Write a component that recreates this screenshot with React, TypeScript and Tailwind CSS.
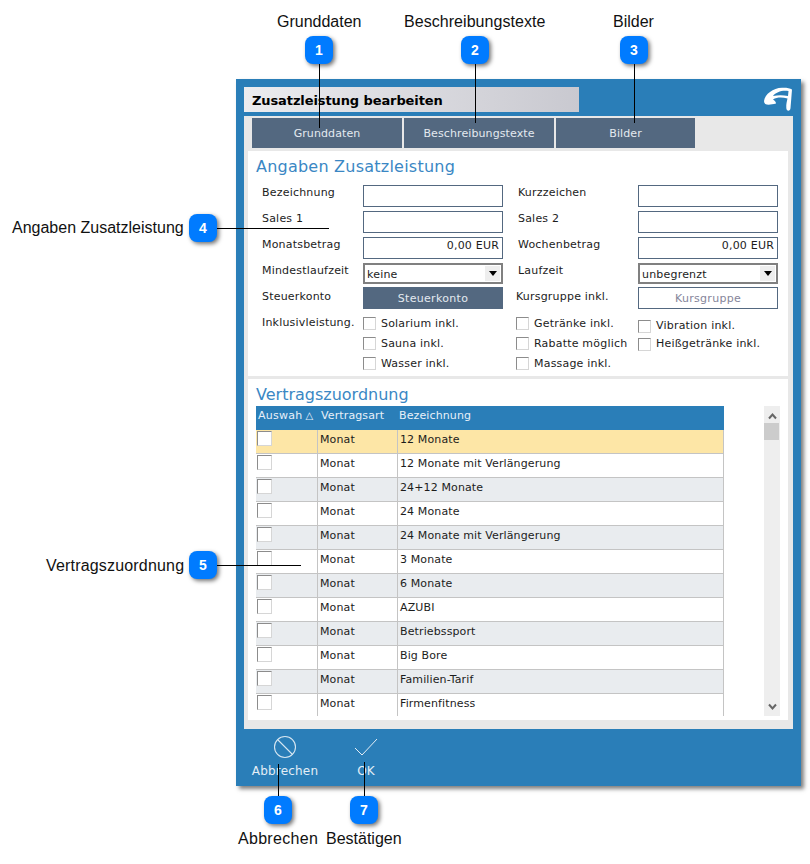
const rows = ["12 Monate","12 Monate mit Verlängerung","24+12 Monate","24 Monate","24 Monate mit Verlängerung","3 Monate","6 Monate","AZUBI","Betriebssport","Big Bore","Familien-Tarif","Firmenfitness"];

function Check({ className = "" }: { className?: string }) {
  return <span className={"block w-[13px] h-[13px] shrink-0 bg-white border border-t-[#8c8c8c] border-l-[#8c8c8c] border-r-[#d6d6d6] border-b-[#d6d6d6] " + className} />;
}

function CheckLabel({ text, tall = true }: { text: string; tall?: boolean }) {
  return (
    <div className={"flex items-center gap-[5px] " + (tall ? "h-[20px]" : "h-[18px]")}>
      <Check />
      <span className={tall ? "pt-[2px]" : ""}>{text}</span>
    </div>
  );
}

function Badge({ n, x, y }: { n: number; x: number; y: number }) {
  return (
    <div
      className="absolute w-[28px] h-[28px] rounded-[8px] bg-[#007bff] text-white font-bold text-[14px] flex items-center justify-center shadow-[2px_2px_4px_rgba(0,0,0,0.55)] font-['Liberation_Sans',sans-serif]"
      style={{ left: x - 14, top: y - 14 }}
    >
      {n}
    </div>
  );
}

function Line({ x, y, w, h }: { x: number; y: number; w: number; h: number }) {
  return <div className="absolute bg-black" style={{ left: x, top: y, width: w, height: h }} />;
}

function Note({ text, x, y, className = "" }: { text: string; x: number; y: number; className?: string }) {
  return (
    <div className={"absolute text-[16px] leading-[18px] text-[#111] whitespace-nowrap font-['Liberation_Sans',sans-serif] " + className} style={{ left: x, top: y }}>
      {text}
    </div>
  );
}

function Field({ value = "" }: { value?: string }) {
  return <div className="w-[140px] h-[22px] border border-[#536880] bg-white text-right pr-[3px] leading-[16px]">{value}</div>;
}

function Select({ value }: { value: string }) {
  return (
    <div className="w-[140px] h-[21px] border-[2px] border-[#808080] bg-white flex items-center justify-between pl-[2px] pr-[1px]">
      <span className="pt-[2px]">{value}</span>
      <span className="w-[15px] h-[15px] bg-[#eeeeee] flex items-center justify-center">
        <svg width="8" height="5" viewBox="0 0 8 5"><path d="M0 0h8L4 5z" fill="#000" /></svg>
      </span>
    </div>
  );
}

function FormRow({ l1, c1, l2, c2, top = "pt-[1px]", l2Class = "w-[135px] pl-[15px]" }: { l1: string; c1: React.ReactNode; l2: string; c2: React.ReactNode; top?: string; l2Class?: string }) {
  return (
    <div className="flex items-start leading-[14px] mb-[4px]">
      <div className={"w-[101px] " + top}>{l1}</div>
      {c1}
      <div className={l2Class + " " + top}>{l2}</div>
      {c2}
    </div>
  );
}

export default function App() {
  return (
    <div className="relative w-[810px] h-[864px] bg-white overflow-hidden font-['DejaVu_Sans',sans-serif] text-[11px] text-[#1c1c1c]">
      <div className="pt-[79px] pl-[236px]">
        <div className="w-[565px] h-[707px] bg-[#2a7eb8] shadow-[3px_3px_4px_rgba(0,0,0,0.5)] px-[8px] pt-[8px] flex flex-col">
          <div className="flex justify-between items-start h-[29px] shrink-0">
            <div className="w-[335px] h-[25px] bg-gradient-to-r from-[#ececef] to-[#c9c9d0] pl-[8px] pt-[1px] leading-[25px] font-bold text-[13px] tracking-[-0.1px] text-black">
              Zusatzleistung bearbeiten
            </div>
            <svg width="30" height="25" viewBox="0 0 30 25">
              <path fillRule="evenodd" d="M1 14C2 7 10 1 19 0.700C23 0.500 27 1 29 2.500C28.500 9 28 15 27.500 21C27.300 24.500 23.500 24.500 23.300 21C23 17 24 14 24.500 11.500C19 10 14 10 10 12.500C12 14 13 15 13 16.500C7 18 1 19 1 14ZM25.500 4C19 3 13 5 10 9C15 8 20 8 25 9Z" fill="#fff" />
            </svg>
          </div>
          <div className="bg-[#e8e8e8] w-[549px] h-[613px] shrink-0 pt-[2px] px-[4px]">
            <div className="flex gap-[2px] pl-[4px] h-[30px] tracking-[0.1px]">
              <div className="w-[150px] pt-[2px] bg-[#536880] text-[#e4eaf0] flex items-center justify-center">Grunddaten</div>
              <div className="w-[150px] pt-[2px] bg-[#536880] text-[#e4eaf0] flex items-center justify-center">Beschreibungstexte</div>
              <div className="w-[139px] pt-[2px] bg-[#536880] text-[#e4eaf0] flex items-center justify-center">Bilder</div>
            </div>
            <div className="mt-[3px] w-[540px] h-[225px] bg-white pl-[14px] tracking-[0.2px]">
              <h2 className="h-[34px] -ml-[6px] text-[16px] tracking-[0.23px] leading-[32px] text-[#3a87c4]">Angaben Zusatzleistung</h2>
              <FormRow l1="Bezeichnung" c1={<Field />} l2="Kurzzeichen" c2={<Field />} />
              <FormRow l1="Sales 1" c1={<Field />} l2="Sales 2" c2={<Field />} />
              <FormRow l1="Monatsbetrag" c1={<Field value="0,00 EUR" />} l2="Wochenbetrag" c2={<Field value="0,00 EUR" />} />
              <div className="h-[24px]">
                <FormRow l1="Mindestlaufzeit" c1={<Select value="keine" />} l2="Laufzeit" c2={<Select value="unbegrenzt" />} />
              </div>
              <FormRow
                l1="Steuerkonto"
                top="pt-[3px]"
                l2Class="w-[135px] pl-[13px]"
                c1={<div className="w-[140px] h-[22px] pt-[2px] bg-[#536880] text-[#e4eaf0] tracking-[0.3px] flex items-center justify-center">Steuerkonto</div>}
                l2="Kursgruppe inkl."
                c2={<div className="w-[140px] h-[22px] pt-[2px] border border-[#536880] text-[#85859a] tracking-[0.3px] flex items-center justify-center">Kursgruppe</div>}
              />
              <div className="flex items-start">
                <div className="w-[101px] leading-[14px] pt-[3px]">Inklusivleistung.</div>
                <div className="w-[153px]">
                  <CheckLabel text="Solarium inkl." />
                  <CheckLabel text="Sauna inkl." />
                  <CheckLabel text="Wasser inkl." />
                </div>
                <div className="w-[122px]">
                  <CheckLabel text="Getränke inkl." />
                  <CheckLabel text="Rabatte möglich" />
                  <CheckLabel text="Massage inkl." />
                </div>
                <div className="pt-[4px]">
                  <CheckLabel text="Vibration inkl." tall={false} />
                  <CheckLabel text="Heißgetränke inkl." tall={false} />
                </div>
              </div>
            </div>
            <div className="mt-[3px] w-[540px] h-[341px] bg-white pl-[8px] flex flex-col">
              <h2 className="h-[27px] shrink-0 text-[16px] leading-[32px] text-[#3a87c4]">Vertragszuordnung</h2>
              <div className="flex items-start">
                <div className="w-[468px] h-[310px] overflow-hidden shrink-0 tracking-[0.12px]">
                  <div className="flex h-[24px] bg-[#2a7eb8] text-[#e8f0f8] leading-[20px]">
                    <div className="w-[61px] pl-[2px] flex whitespace-nowrap overflow-hidden tracking-[0.25px]">Auswah<span className="ml-[3px] text-[10px]">△</span></div>
                    <div className="w-[80px] pl-[4px]">Vertragsart</div>
                    <div className="pl-[2px]">Bezeichnung</div>
                  </div>
                  {rows.map((r, i) => (
                    <div key={r} className={"flex h-[24px] border-b border-[#c4c4c4] leading-[20px] " + (i === 0 ? "bg-[#fde6a6]" : i % 2 === 0 ? "bg-[#e9ecef]" : "bg-white")}>
                      <div className="w-[61px] pl-[1px] pt-[1px]"><Check className="w-[15px] h-[15px]" /></div>
                      <div className="w-[80px] pl-[2px] border-l border-[#c4c4c4]">Monat</div>
                      <div className="flex-1 pl-[2px] border-l border-r border-[#c4c4c4]">{r}</div>
                    </div>
                  ))}
                </div>
                <div className="ml-[40px] w-[16px] h-[310px] bg-[#eeeeee] flex flex-col items-center shrink-0">
                  <svg width="9" height="8" viewBox="0 0 9 8" className="mt-[6px]"><path d="M1 6.500L4.500 2.500L8 6.500" fill="none" stroke="#666" strokeWidth="2" /></svg>
                  <div className="w-[15px] h-[17px] bg-[#cccccc] mt-[3px] self-start" />
                  <svg width="9" height="8" viewBox="0 0 9 8" className="mt-auto mb-[5px]"><path d="M1 1.500L4.500 5.500L8 1.500" fill="none" stroke="#666" strokeWidth="2" /></svg>
                </div>
              </div>
            </div>
          </div>
          <div className="flex text-[#e4eef6] text-[12px] tracking-[0.2px] pl-[7px]">
            <div className="w-[68px] flex flex-col items-center">
              <svg width="24" height="24" viewBox="0 0 24 24" className="mt-[6px]"><circle cx="12" cy="12" r="10.500" fill="none" stroke="#d6e6f1" strokeWidth="1.100" /><path d="M4.500 4.500L19.500 19.500" stroke="#d6e6f1" strokeWidth="1.100" /></svg>
              <span className="mt-[4px] leading-[16px] whitespace-nowrap">Abbrechen</span>
            </div>
            <div className="ml-[27px] w-[40px] flex flex-col items-center">
              <svg width="24" height="24" viewBox="0 0 24 24" className="mt-[6px]"><path d="M1 13L8 20L23 4" fill="none" stroke="#e4eef6" strokeWidth="1" /></svg>
              <span className="mt-[4px] leading-[16px]">OK</span>
            </div>
          </div>
        </div>
      </div>

      <Note text="Grunddaten" x={277} y={13} />
      <Note text="Beschreibungstexte" x={404} y={13} className="tracking-[0.05px]" />
      <Note text="Bilder" x={613} y={13} />
      <Note text="Angaben Zusatzleistung" x={12} y={219} />
      <Note text="Vertragszuordnung" x={46} y={557} className="tracking-[0.18px]" />
      <Note text="Abbrechen" x={238} y={830} className="tracking-[0.3px]" />
      <Note text="Bestätigen" x={326} y={830} />

      <Line x={319} y={64} w={1} h={64} />
      <Line x={475} y={64} w={1} h={59} />
      <Line x={634} y={64} w={1} h={59} />
      <Line x={217} y={228} w={112} h={1} />
      <Line x={217} y={565} w={84} h={1} />
      <Line x={278} y={764} w={1} h={33} />
      <Line x={364} y={762} w={1} h={35} />

      <Badge n={1} x={319} y={50} />
      <Badge n={2} x={475} y={50} />
      <Badge n={3} x={634} y={50} />
      <Badge n={4} x={203} y={228} />
      <Badge n={5} x={203} y={565} />
      <Badge n={6} x={278} y={810} />
      <Badge n={7} x={364} y={810} />
    </div>
  );
}
